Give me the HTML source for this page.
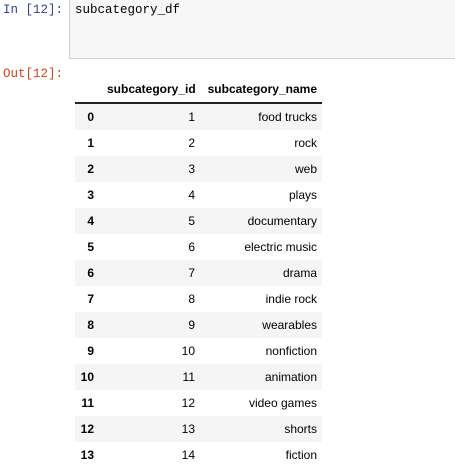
<!DOCTYPE html>
<html><head><style>
body{margin:0;width:455px;height:451px;overflow:hidden;background:#fff;position:relative;font-family:"Liberation Sans",Arial,sans-serif;}
.p{position:absolute;font-family:"Liberation Mono",monospace;font-size:12.5px;}
.in{left:3px;top:3px;color:#303F9F}
.out{left:3px;top:67px;color:#D84315}
.box{position:absolute;left:69px;top:-1px;width:390px;height:59px;background:#f7f7f7;border-left:1px solid #cfcfcf;border-bottom:1px solid #cfcfcf;}
.code{left:75px;top:3px;color:#000}
table{position:absolute;left:75px;top:76px;border-collapse:collapse;font-size:12px;color:#000;table-layout:fixed;width:247px}
th{font-weight:bold;height:26px;padding:0 5px;text-align:right;border-bottom:2px solid #222;}
td,tbody th{height:26px;padding:0 5px;text-align:right;border:none;font-weight:normal}
tbody th{font-weight:bold;text-align:right;padding:0 8px 0 0}
tbody tr:nth-child(odd){background:#f5f5f5}
</style></head><body>
<div class="p in">In [12]:</div>
<div class="box"></div>
<div class="p code">subcategory_df</div>
<div class="p out">Out[12]:</div>
<table>
<colgroup><col style="width:27px"><col style="width:98px"><col style="width:122px"></colgroup>
<thead><tr><th></th><th>subcategory_id</th><th>subcategory_name</th></tr></thead>
<tbody>
<tr><th>0</th><td>1</td><td>food trucks</td></tr>
<tr><th>1</th><td>2</td><td>rock</td></tr>
<tr><th>2</th><td>3</td><td>web</td></tr>
<tr><th>3</th><td>4</td><td>plays</td></tr>
<tr><th>4</th><td>5</td><td>documentary</td></tr>
<tr><th>5</th><td>6</td><td>electric music</td></tr>
<tr><th>6</th><td>7</td><td>drama</td></tr>
<tr><th>7</th><td>8</td><td>indie rock</td></tr>
<tr><th>8</th><td>9</td><td>wearables</td></tr>
<tr><th>9</th><td>10</td><td>nonfiction</td></tr>
<tr><th>10</th><td>11</td><td>animation</td></tr>
<tr><th>11</th><td>12</td><td>video games</td></tr>
<tr><th>12</th><td>13</td><td>shorts</td></tr>
<tr><th>13</th><td>14</td><td>fiction</td></tr>
</tbody></table>
</body></html>
